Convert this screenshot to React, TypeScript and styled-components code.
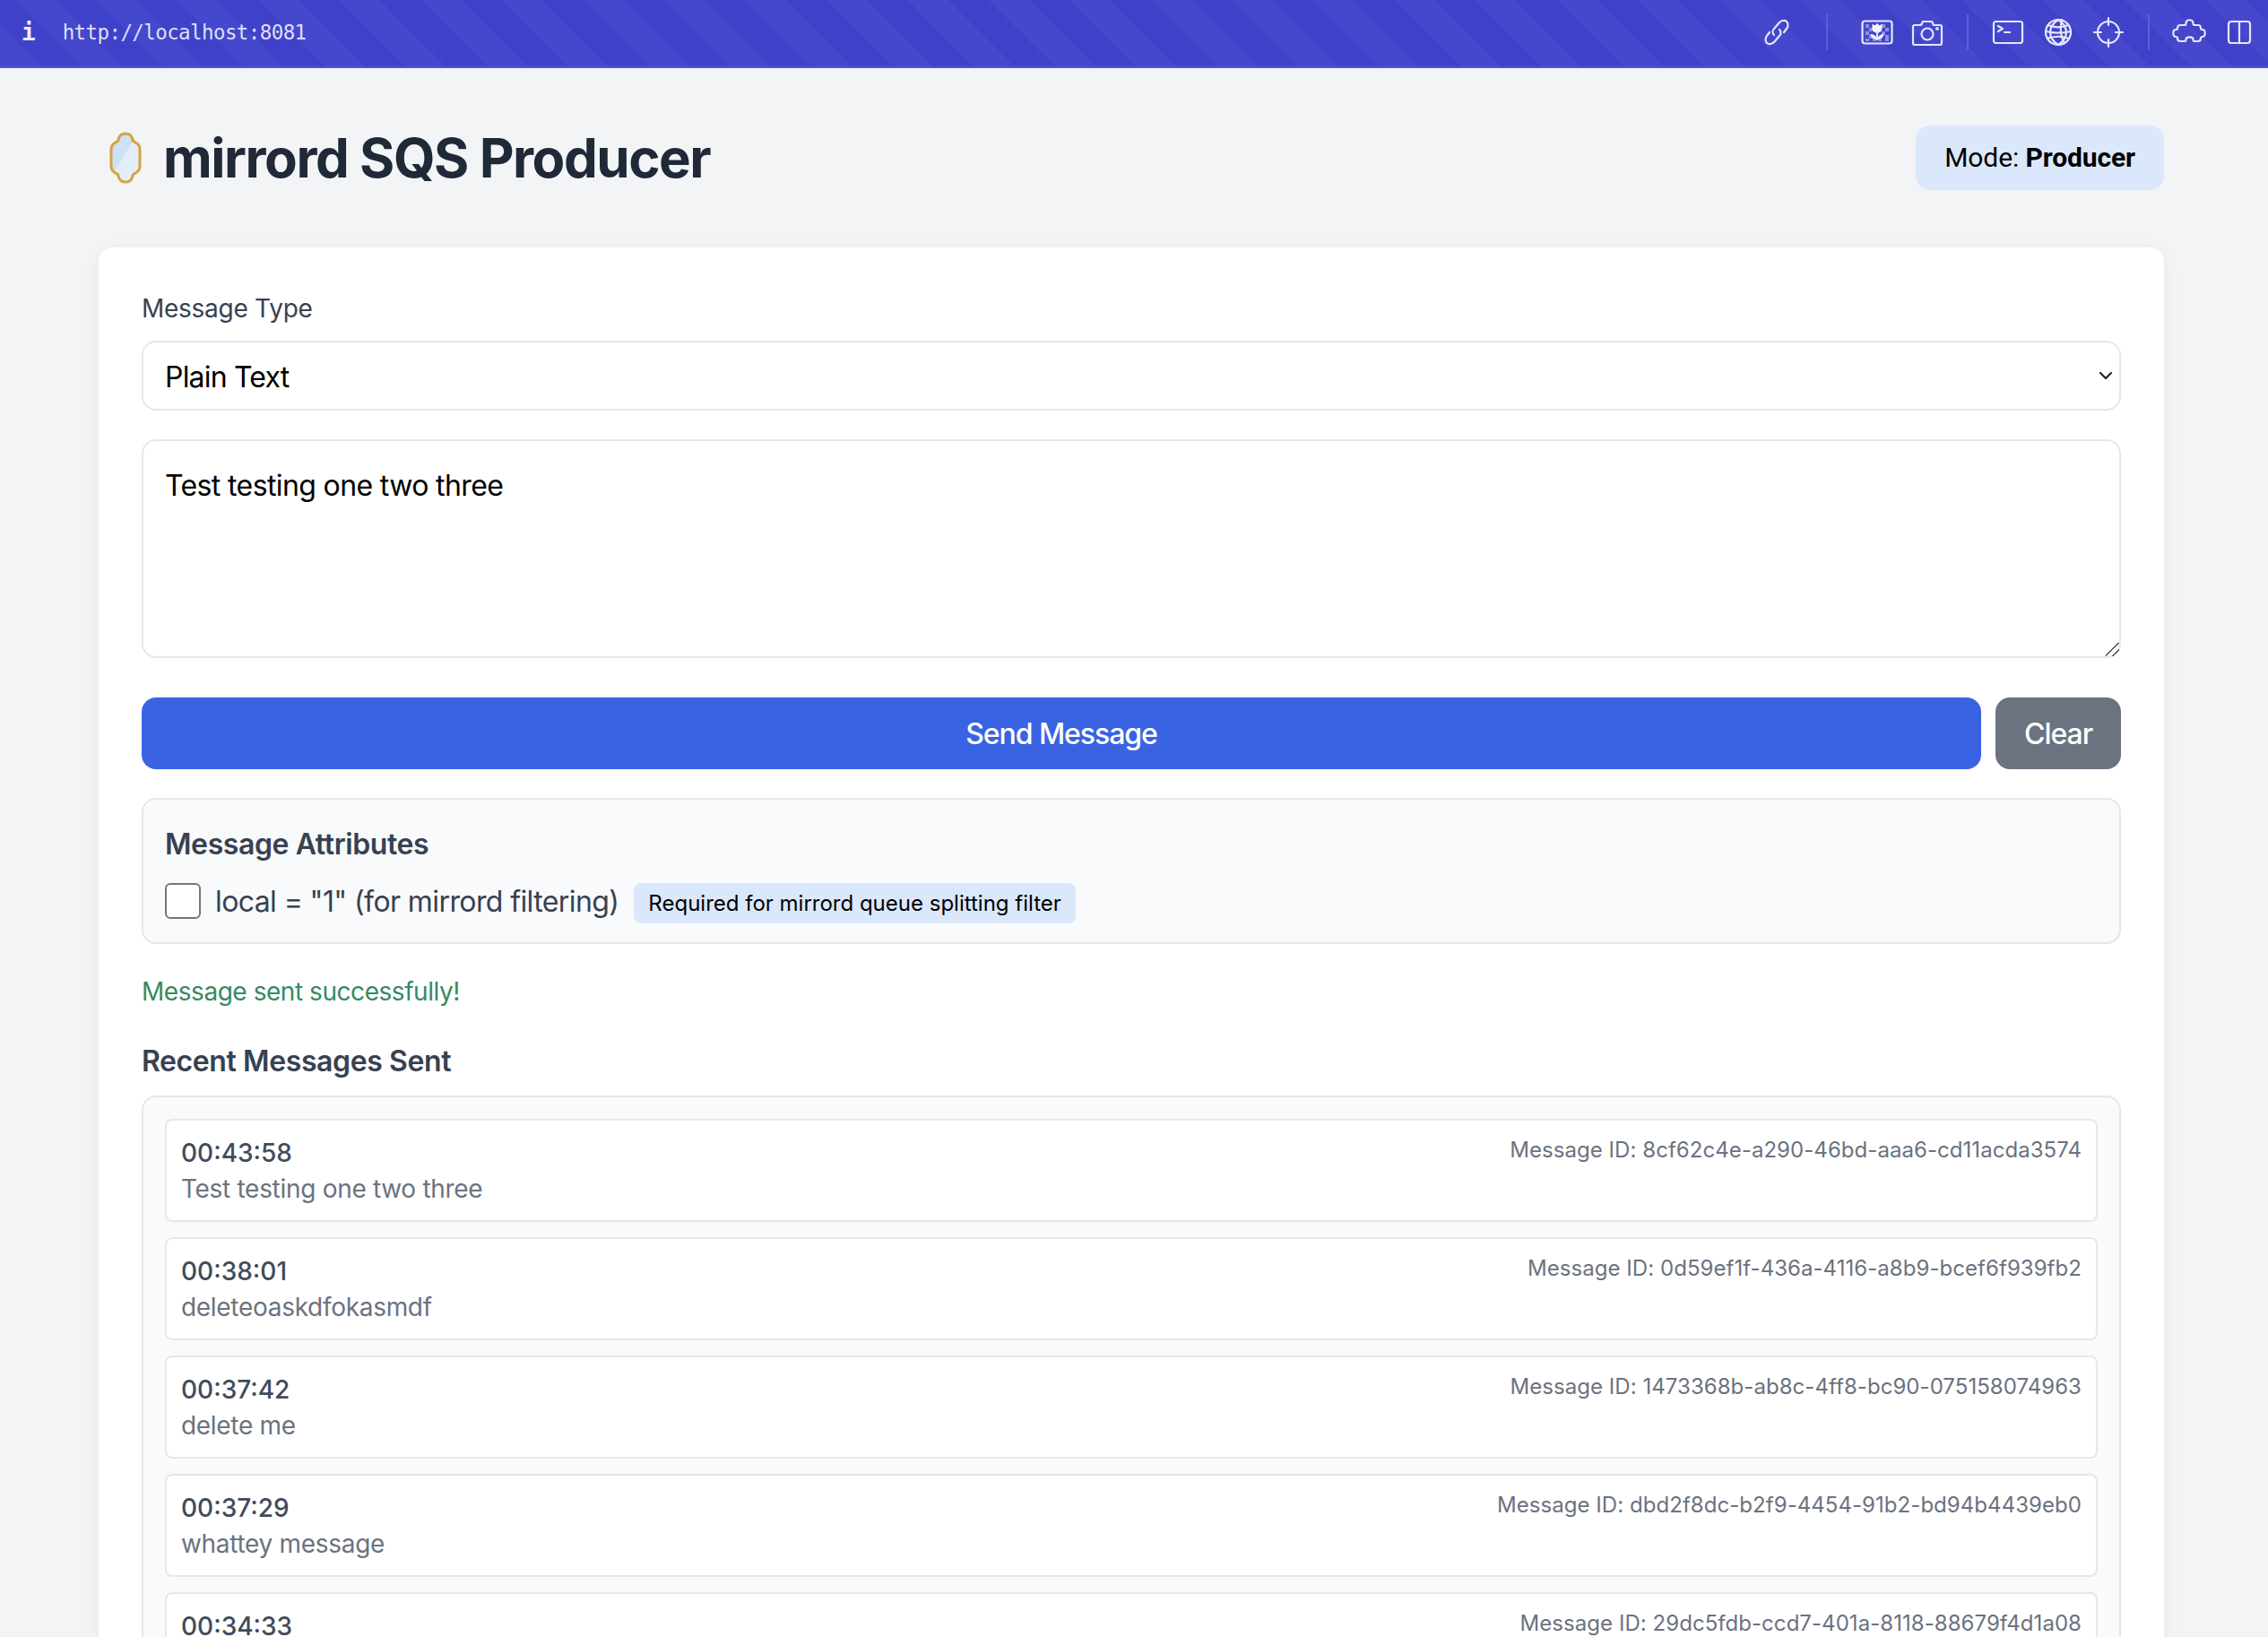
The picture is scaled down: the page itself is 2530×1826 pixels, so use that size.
import { createGlobalStyle, styled } from "styled-components";

const GlobalStyle = createGlobalStyle`
  html, body {
    margin: 0;
    height: 100%;
    overflow: hidden;
    background: #f3f4f6;
  }
  * { box-sizing: border-box; }
  body {
    font-family: Inter, "Noto Sans", sans-serif;
    color: #1f2937;
  }
`;

const Page = styled.div`
  height: 1826px;
  overflow: hidden;
`;

const TopBar = styled.header`
  height: 76px;
  display: flex;
  align-items: center;
  justify-content: space-between;
  padding: 0 4px 2px 24px;
  border-bottom: 2px solid #5355d2;
  background: repeating-linear-gradient(
    45deg,
    #4548cc 0,
    #4548cc 32px,
    #3f42c9 32px,
    #3f42c9 64px
  );
`;

const UrlGroup = styled.div`
  display: flex;
  align-items: center;
  gap: 30px;
`;

const InfoGlyph = styled.span`
  font-family: "DejaVu Sans Mono", monospace;
  font-size: 26px;
  font-weight: 700;
  color: #eeeefc;
`;

const Url = styled.span`
  font-family: "DejaVu Sans Mono", monospace;
  font-size: 22.5px;
  letter-spacing: -0.6px;
  color: #dedff8;
`;

const Tools = styled.div`
  display: flex;
  align-items: center;
`;

const ToolIcon = styled.svg`
  width: 36px;
  height: 36px;
  margin: 0 10px;
  overflow: visible;
  fill: none;
  stroke: #e4e5fa;
  stroke-width: 2.2;
  stroke-linecap: round;
  stroke-linejoin: round;
`;

const ToolDivider = styled.span<{ $wide?: boolean }>`
  width: 2px;
  height: 40px;
  margin: 0 ${(p) => (p.$wide ? "27px" : "16px")};
  background: #5c5fd8;
`;

const Main = styled.main`
  width: 2304px;
  margin-left: 110px;
  padding-top: 64px;
`;

const TitleRow = styled.div`
  display: flex;
  align-items: center;
  justify-content: space-between;
  margin-bottom: 64px;
`;

const Title = styled.h1`
  display: flex;
  align-items: center;
  gap: 24px;
  margin: 0 0 0 12px;
  font-size: 60px;
  font-weight: 700;
  line-height: 72px;
  letter-spacing: -1.45px;
  color: #1f2937;
`;

const ModeBadge = styled.div`
  height: 72px;
  padding: 16px 32px;
  border-radius: 16px;
  background: #dbe7fb;
  font-family: Roboto, sans-serif;
  font-size: 30px;
  line-height: 40px;
  letter-spacing: -0.1px;
  color: #000;

  b { font-weight: 700; }
`;

const Card = styled.section`
  padding: 48px 48px 0;
  border-radius: 16px;
  background: #fff;
  box-shadow: 0 4px 24px rgba(0, 0, 0, 0.05);
`;

const FieldLabel = styled.label`
  display: block;
  margin-bottom: 16px;
  font-size: 28px;
  line-height: 40px;
  letter-spacing: -0.27px;
  color: #374151;
`;

const SelectWrap = styled.div`
  position: relative;
  margin-bottom: 32px;
`;

const TypeSelect = styled.select`
  display: block;
  width: 100%;
  height: 78px;
  padding: 2px 24px 0;
  appearance: none;
  border: 2px solid #e5e7eb;
  border-radius: 16px;
  background: #fff;
  font-family: inherit;
  font-size: 32px;
  letter-spacing: -0.8px;
  color: #000;
`;

const Chevron = styled.svg`
  position: absolute;
  top: 32px;
  right: 7px;
  width: 20px;
  height: 16px;
  fill: none;
  stroke: #222;
  stroke-width: 2.2;
  stroke-linecap: round;
  stroke-linejoin: round;
`;

const MessageInput = styled.textarea`
  display: block;
  width: 100%;
  height: 244px;
  margin-bottom: 44px;
  padding: 30px 24px 24px;
  border: 2px solid #e5e7eb;
  border-radius: 16px;
  font-family: inherit;
  font-size: 32px;
  line-height: 40px;
  letter-spacing: -0.62px;
  color: #000;

  &::-webkit-resizer {
    background: linear-gradient(
      135deg,
      transparent 44%,
      #555 44%,
      #555 52%,
      transparent 52%,
      transparent 70%,
      #555 70%,
      #555 78%,
      transparent 78%
    );
  }
`;

const ButtonRow = styled.div`
  display: flex;
  gap: 16px;
  margin-bottom: 32px;
`;

const ActionButton = styled.button<{ $tone: "primary" | "muted" }>`
  flex: ${(p) => (p.$tone === "primary" ? "1" : "0 0 140px")};
  height: 80px;
  padding: 0;
  border: 0;
  border-radius: 16px;
  background: ${(p) => (p.$tone === "primary" ? "#3963e3" : "#6b7280")};
  font-family: inherit;
  font-size: 32px;
  font-weight: 500;
  letter-spacing: -1.05px;
  color: #fff;
`;

const AttributesBox = styled.div`
  height: 163px;
  padding: 26px 24px 0;
  margin-bottom: 31px;
  border: 2px solid #e5e7eb;
  border-radius: 16px;
  background: #f9fafb;
`;

const SubHeading = styled.h3`
  margin: 0;
  font-size: 32px;
  font-weight: 600;
  line-height: 48px;
  letter-spacing: -0.4px;
  color: #374151;
`;

const AttributeRow = styled.div`
  display: flex;
  align-items: center;
  margin-top: 15px;
`;

const CheckBox = styled.input`
  width: 40px;
  height: 40px;
  margin: -2px 16px 0 0;
  appearance: none;
  border: 2px solid #767676;
  border-radius: 6px;
  background: #fff;
`;

const AttributeLabel = styled.label`
  font-size: 32px;
  line-height: 44px;
  letter-spacing: -0.6px;
  color: #374151;
`;

const Hint = styled.span`
  margin: 4px 0 0 17px;
  padding: 0 16px;
  border-radius: 8px;
  background: #dbe7fb;
  font-size: 24px;
  line-height: 45px;
  color: #000;
`;

const Status = styled.p`
  margin: 0 0 32px;
  font-size: 28px;
  line-height: 44px;
  letter-spacing: -0.45px;
  color: #38895f;
`;

const RecentHeading = styled(SubHeading)`
  margin-bottom: 14px;
`;

const RecentList = styled.div`
  display: flex;
  flex-direction: column;
  gap: 17px;
  padding: 24px;
  border: 2px solid #e5e7eb;
  border-radius: 16px;
  background: #f9fafb;
`;

const RecentItem = styled.article`
  display: flex;
  justify-content: space-between;
  align-items: flex-start;
  height: 115px;
  padding: 16px 16px 0;
  border: 2px solid #e5e7eb;
  border-radius: 8px;
  background: #fff;
`;

const ItemTime = styled.div`
  font-size: 28px;
  font-weight: 500;
  line-height: 40px;
  color: #414b5b;
`;

const ItemText = styled.div`
  font-size: 28px;
  line-height: 40px;
  letter-spacing: -0.3px;
  color: #6b7280;
`;

const ItemId = styled.div`
  margin-top: -1px;
  font-size: 24px;
  line-height: 36px;
  letter-spacing: 0.05px;
  color: #6b7280;
`;

const Mirror = () => (
  <svg width="36" height="58" viewBox="0 0 36 58">
    <defs>
      <linearGradient id="glass" x1="0" y1="0" x2="1" y2="1">
        <stop offset="0.45" stopColor="#cde0f6" />
        <stop offset="0.46" stopColor="#e2eefc" />
      </linearGradient>
    </defs>
    <path
      d="M18 2C22 2 24.500 4 25.500 7C25.500 11 28 11.500 30 12.500C32.500 14 34 17 34 20V38C34 41 32.500 44 30 45.500C28 46.500 25.500 47 25.500 51C24.500 54 22 56 18 56C14 56 11.500 54 10.500 51C10.500 47 8 46.500 6 45.500C3.500 44 2 41 2 38V20C2 17 3.500 14 6 12.500C8 11.500 10.500 11 10.500 7C11.500 4 14 2 18 2Z"
      fill="url(#glass)"
      stroke="#d6a23e"
      strokeWidth="3"
    />
  </svg>
);

const messages = [
  { time: "00:43:58", text: "Test testing one two three", id: "8cf62c4e-a290-46bd-aaa6-cd11acda3574" },
  { time: "00:38:01", text: "deleteoaskdfokasmdf", id: "0d59ef1f-436a-4116-a8b9-bcef6f939fb2" },
  { time: "00:37:42", text: "delete me", id: "1473368b-ab8c-4ff8-bc90-075158074963" },
  { time: "00:37:29", text: "whattey message", id: "dbd2f8dc-b2f9-4454-91b2-bd94b4439eb0" },
  { time: "00:34:33", text: "", id: "29dc5fdb-ccd7-401a-8118-88679f4d1a08" },
];

export default function App() {
  return (
    <Page>
      <GlobalStyle />
      <TopBar>
        <UrlGroup>
          <InfoGlyph>i</InfoGlyph>
          <Url>http://localhost:8081</Url>
        </UrlGroup>
        <Tools>
          <ToolIcon viewBox="0 0 36 36">
            <path d="M15 21c-2-2-2-5 0-7l6-7c2-2 6-3 8-1s2 6 0 8l-3 4" />
            <path d="M21 15c2 2 2 5 0 7l-6 7c-2 2-6 3-8 1s-2-6 0-8l3-4" />
          </ToolIcon>
          <ToolDivider $wide />
          <ToolIcon viewBox="0 0 36 36">
            <rect x="1.500" y="5.500" width="33" height="25" rx="3" />
            <path d="M5 9h4v4H5zM9 13h4v4H9zM5 17h4v4H5zM9 21h4v4H9zM5 25h4v3H5zM13 25h4v3h-4zM23 9h4v4h-4zM27 13h4v4h-4zM23 17h4v4h-4zM27 21h4v4h-4zM19 25h4v3h-4zM27 25h4v3h-4z" fill="#8d8fe4" stroke="none" />
            <path d="M12.500 8.500l2.800 2 2.700-2.500 2.700 2.500 2.800-2v5.500c0 2.500-2.300 4.500-5.500 4.500s-5.500-2-5.500-4.500z" fill="#f4f4fe" stroke="none" />
            <path d="M18 17v9" />
            <path d="M10.500 20c3.500 0 6.500 2 7.500 6-4 0-7-2-7.500-6zM25.500 20c-3.500 0-6.500 2-7.500 6 4 0 7-2 7.500-6z" fill="#f4f4fe" stroke="none" />
          </ToolIcon>
          <ToolIcon viewBox="0 0 36 36">
            <path d="M4 10h7l2-4h10l2 4h7c1 0 2 1 2 2v18c0 1-1 2-2 2H4c-1 0-2-1-2-2V12c0-1 1-2 2-2z" />
            <circle cx="18" cy="20" r="6.500" />
            <circle cx="29" cy="14" r="0.800" />
          </ToolIcon>
          <ToolDivider />
          <ToolIcon viewBox="0 0 36 36">
            <rect x="2" y="6" width="32" height="24" rx="2.500" />
            <path d="M7 11l5 3-5 3M14 18h6" />
          </ToolIcon>
          <ToolIcon viewBox="0 0 36 36">
            <circle cx="18" cy="18" r="14" />
            <path d="M18 4c-6 4-9 9-9 14s3 10 9 14M18 4c6 4 9 9 9 14s-3 10-9 14" />
            <path d="M7 10c7 3 15 3 22 0M4 17c9 2 19 2 28 0M6 25c8-3 16-3 24 0" />
            <path d="M22 4c-2 8-2 18 3 26" />
          </ToolIcon>
          <ToolIcon viewBox="0 0 36 36">
            <circle cx="18" cy="18" r="12" />
            <path d="M18 2v8M18 26v8M2 18h8M26 18h8" />
          </ToolIcon>
          <ToolDivider />
          <ToolIcon viewBox="0 0 36 36">
            <path d="M8 10h5c1 0 1.500-.8 1.500-2c0-5 8-5 8 0c0 1.200.5 2 1.500 2h4c2 0 3 1.500 3 3.500c0 1 .8 1.500 1.700 1.500c4 0 4 8 0 8c-.9 0-1.700.5-1.700 1.500c0 2-1 3.500-3 3.500h-4c-1 0-1.500-.8-1.500-2c0-3.500-8-3.500-8 0c0 1.200-.5 2-1.500 2H8c-2 0-3-1.500-3-3.500c0-1-.8-1.500-1.700-1.500c-4 0-4-8 0-8c.9 0 1.700-.5 1.700-1.500C5 11.500 6 10 8 10z" />
          </ToolIcon>
          <ToolIcon viewBox="0 0 36 36">
            <rect x="6" y="6" width="24" height="24" rx="3" />
            <path d="M18 6v24" />
          </ToolIcon>
        </Tools>
      </TopBar>

      <Main>
        <TitleRow>
          <Title>
            <Mirror />
            mirrord SQS Producer
          </Title>
          <ModeBadge>
            Mode: <b>Producer</b>
          </ModeBadge>
        </TitleRow>

        <Card>
          <FieldLabel htmlFor="type">Message Type</FieldLabel>
          <SelectWrap>
            <TypeSelect id="type" defaultValue="text">
              <option value="text">Plain Text</option>
              <option value="json">JSON</option>
            </TypeSelect>
            <Chevron viewBox="0 0 20 16">
              <path d="M4 4l6 6 6-6" />
            </Chevron>
          </SelectWrap>
          <MessageInput defaultValue="Test testing one two three" />

          <ButtonRow>
            <ActionButton $tone="primary">Send Message</ActionButton>
            <ActionButton $tone="muted">Clear</ActionButton>
          </ButtonRow>

          <AttributesBox>
            <SubHeading>Message Attributes</SubHeading>
            <AttributeRow>
              <CheckBox type="checkbox" id="local" />
              <AttributeLabel htmlFor="local">local = "1" (for mirrord filtering)</AttributeLabel>
              <Hint>Required for mirrord queue splitting filter</Hint>
            </AttributeRow>
          </AttributesBox>

          <Status>Message sent successfully!</Status>
          <RecentHeading>Recent Messages Sent</RecentHeading>
          <RecentList>
            {messages.map((m) => (
              <RecentItem key={m.id}>
                <div>
                  <ItemTime>{m.time}</ItemTime>
                  <ItemText>{m.text}</ItemText>
                </div>
                <ItemId>Message ID: {m.id}</ItemId>
              </RecentItem>
            ))}
          </RecentList>
        </Card>
      </Main>
    </Page>
  );
}
